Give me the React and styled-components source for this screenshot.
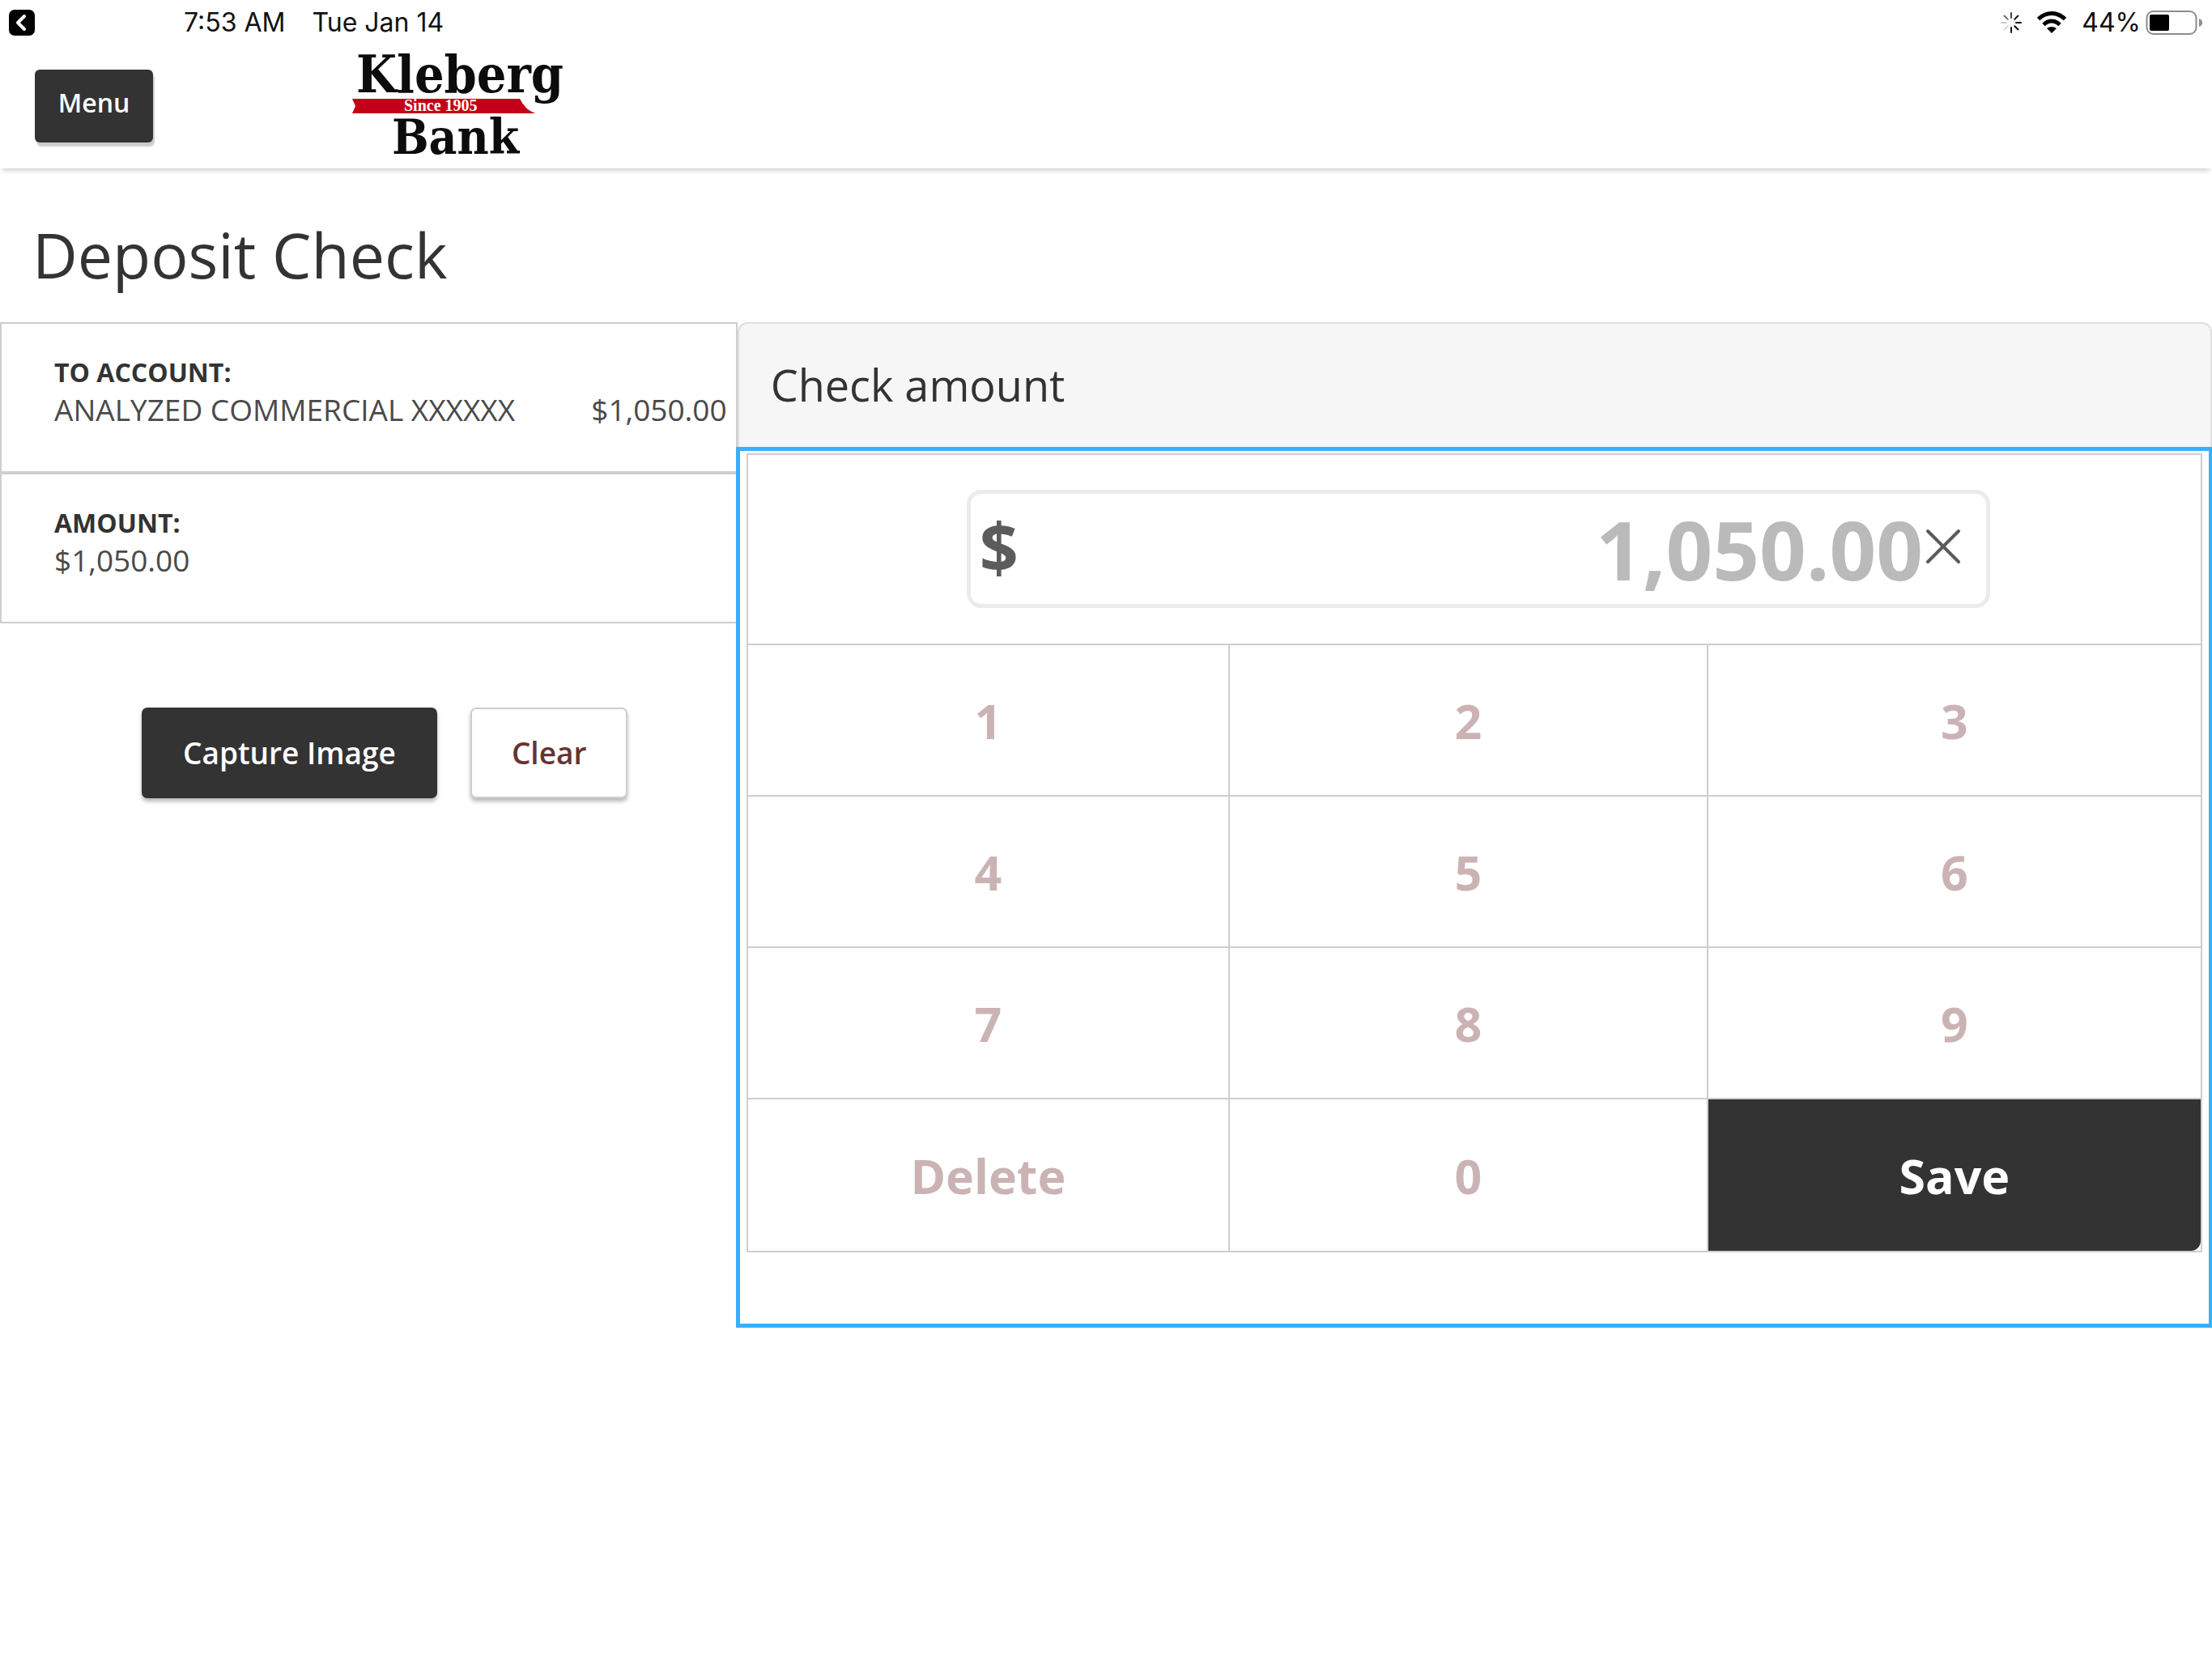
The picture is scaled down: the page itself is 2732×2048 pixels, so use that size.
import React, { useState } from "react";
import styled, { createGlobalStyle, css } from "styled-components";

const GlobalStyle = createGlobalStyle`
  *, *::before, *::after { box-sizing: border-box; }
  body {
    margin: 0;
    background: #fff;
    color: #333;
    font-family: "Open Sans", "Noto Sans", sans-serif;
  }
  button, input { font: inherit; color: inherit; }
  h1, h2, h3, p { margin: 0; font-weight: 400; }
`;

const line = "#cecece";
const ink = "#333";
const focusBlue = "#38b0ff";

const StatusBar = styled.div`
  display: flex;
  align-items: center;
  height: 54px;
  padding: 2px 11px 0;
  color: #111;
  font: 400 32px/40px Inter, "Liberation Sans", sans-serif;
`;

const BackButton = styled.button`
  display: flex;
  width: 32px;
  height: 32px;
  margin-right: 184px;
  padding: 0;
  border: 0;
  background: none;
`;

const StatusText = styled.span`
  margin-right: 33px;
`;

const StatusIcons = styled.div`
  display: flex;
  align-items: center;
  gap: 18px;
  margin-left: auto;
`;

const Battery = styled.span`
  display: flex;
  align-items: center;
  gap: 6px;
`;

const Header = styled.header`
  display: flex;
  align-items: center;
  height: 154px;
  padding: 0 43px;
  box-shadow: 0 6px 6px -3px rgba(0, 0, 0, 0.18);
`;

const MenuButton = styled.button`
  width: 146px;
  height: 90px;
  margin-right: 246px;
  padding: 0 0 8px;
  border: 0;
  border-radius: 6px;
  background: ${ink};
  color: #fff;
  font-size: 32px;
  font-weight: 600;
  line-height: 44px;
  box-shadow: 2px 5px 2px rgba(0, 0, 0, 0.2);
`;

const Logo = styled.svg`
  display: block;
  overflow: visible;
  font-weight: 700;
`;

const LogoName = styled.text`
  fill: #0c0c0c;
  font-family: "DejaVu Serif Condensed", "DejaVu Serif", serif;
`;

const LogoTagline = styled.text`
  fill: #fff;
  font-family: "Liberation Serif", serif;
  font-size: 20px;
`;

const Title = styled.h1`
  padding: 65px 40px 41px;
  font-size: 77px;
  line-height: 84px;
`;

const Columns = styled.div`
  display: grid;
  grid-template-columns: minmax(0, 1fr) minmax(0, 2fr);
  align-items: start;
`;

const Detail = styled.section`
  padding: 37px 11px 53px 65px;
  border: 2px solid ${line};
  line-height: 46px;
`;

const DetailLabel = styled.h3`
  font-size: 32px;
  font-weight: 700;
  line-height: 46px;
  text-transform: uppercase;
`;

const DetailValue = styled.p`
  display: flex;
  justify-content: space-between;
  color: #4a4a4a;
  font-size: 37px;
`;

const Actions = styled.div`
  display: flex;
  gap: 41px;
  padding: 104px 40px 0 175px;
`;

const ActionButton = styled.button`
  height: 112px;
  padding: 0 49px;
  border: 2px solid ${line};
  border-radius: 7px;
  background: #fff;
  color: #663333;
  font-size: 37px;
  font-weight: 600;
  line-height: 50px;
  box-shadow: 0 4px 5px rgba(0, 0, 0, 0.28);
  ${(p) =>
    p.$primary &&
    css`
      border-color: ${ink};
      background: ${ink};
      color: #fff;
    `}
`;

const AmountPanel = styled.section`
  margin-left: -2px;
`;

const PanelTitle = styled.h2`
  margin-left: 2px;
  padding: 45px 39px 47px;
  border: 2px solid #dedede;
  border-bottom: 0;
  border-radius: 12px 12px 0 0;
  background: #f6f6f6;
  font-size: 54px;
  line-height: 60px;
`;

const PanelBody = styled.div`
  padding: 3px 8px 88px;
  border: 5px solid ${focusBlue};
  border-right-width: 4px;
  background: #fff;
`;

const Keypad = styled.div`
  display: grid;
  grid-template-columns: 594fr 589fr 609fr;
  grid-template-rows: auto repeat(3, 185px) 187px;
  gap: 2px;
  border: 2px solid ${line};
  background: ${line};
`;

const AmountCell = styled.div`
  grid-column: 1 / -1;
  padding: 43px 260px 44px 270px;
  background: #fff;
`;

const AmountField = styled.div`
  display: flex;
  align-items: center;
  height: 146px;
  padding: 0 28px 0 11px;
  border: 5px solid #ebebeb;
  border-radius: 18px;
`;

const CurrencyLabel = styled.label`
  padding-bottom: 6px;
  color: #5c5c5c;
  font-size: 84px;
  font-weight: 700;
  line-height: 110px;
`;

const AmountInput = styled.input`
  flex: 1;
  min-width: 0;
  height: 130px;
  padding: 0;
  border: 0;
  outline: 0;
  background: none;
  color: #bababa;
  font-size: 101px;
  font-weight: 700;
  text-align: right;
`;

const ClearAmount = styled.button`
  display: flex;
  align-items: center;
  justify-content: center;
  width: 50px;
  height: 50px;
  padding: 0 0 6px;
  border: 0;
  background: none;
  color: #5a5a5a;
`;

const Key = styled.button`
  padding: 0;
  border: 0;
  background: #fff;
  color: #cbb3b4;
  font-size: 59px;
  font-weight: 700;
  line-height: 82px;
  ${(p) =>
    p.$primary &&
    css`
      border-bottom-right-radius: 12px;
      background: ${ink};
      color: #fff;
    `}
`;

const KeyCell = styled.div`
  display: grid;
  background: #fff;
`;

const spokes = [0.2, 0.55, 0.75, 0.9, 0.95, 0.95, 0.9, 0.15];

function BankLogo() {
  return (
    <Logo width="262" height="128" viewBox="0 0 262 128" role="img" aria-label="Kleberg Bank, since 1905">
      <path d="M0 55H207Q214 69 226 73H0L4 64Z" fill="#c40018" />
      <LogoName x="5" y="47" fontSize="64">Kleberg</LogoName>
      <LogoTagline x="64" y="70">Since 1905</LogoTagline>
      <LogoName x="49" y="123" fontSize="60">Bank</LogoName>
    </Logo>
  );
}

const toAmount = (digits) =>
  (Number(digits.replace(/\D/g, "")) / 100).toLocaleString("en-US", { minimumFractionDigits: 2 });

export default function App() {
  const [amount, setAmount] = useState("1,050.00");
  const press = (digit) => setAmount(toAmount(amount + digit));
  const removeLast = () => setAmount(toAmount(amount.slice(0, -1)));

  return (
    <>
      <GlobalStyle />
      <StatusBar>
        <BackButton aria-label="Back">
          <svg width="32" height="32" viewBox="0 0 32 32">
            <rect width="32" height="32" rx="7" fill="#000" />
            <path d="M19 8L11 16L19 24" fill="none" stroke="#fff" strokeWidth="4" strokeLinecap="round" strokeLinejoin="round" />
          </svg>
        </BackButton>
        <StatusText>7:53 AM</StatusText>
        <StatusText>Tue Jan 14</StatusText>
        <StatusIcons>
          <svg width="26" height="26" viewBox="-13 -13 26 26" stroke="#000" strokeWidth="2" strokeLinecap="round" aria-hidden="true">
            {spokes.map((o, i) => (
              <path key={i} d="M-6 0H-12" opacity={o} transform={`rotate(${i * 45})`} />
            ))}
          </svg>
          <svg width="38" height="28" viewBox="0 0 38 28" aria-hidden="true">
            <path d="M2.5 9.5Q10 2.5 19 2.5T35.5 9.5M9 16.5Q13.5 12 19 12T29 16.5" fill="none" stroke="#000" strokeWidth="5" />
            <path d="M13 21Q19 17 25 21L19 27Z" fill="#000" />
          </svg>
          <Battery>
            44%
            <svg width="71" height="30" viewBox="0 0 71 30" aria-hidden="true">
              <rect x="1.5" y="1" width="61" height="28" rx="8" fill="#fff" stroke="#8c8c8c" strokeWidth="2" />
              <rect x="5" y="5" width="24" height="20" rx="2" fill="#000" />
              <path d="M66 10Q70 11 70 15T66 20Z" fill="#8c8c8c" />
            </svg>
          </Battery>
        </StatusIcons>
      </StatusBar>

      <Header>
        <MenuButton>Menu</MenuButton>
        <BankLogo />
      </Header>

      <main>
        <Title>Deposit Check</Title>
        <Columns>
          <div>
            <Detail>
              <DetailLabel>To account:</DetailLabel>
              <DetailValue>
                <span>ANALYZED COMMERCIAL XXXXXX</span>
                <span>$1,050.00</span>
              </DetailValue>
            </Detail>
            <Detail>
              <DetailLabel>Amount:</DetailLabel>
              <DetailValue>$1,050.00</DetailValue>
            </Detail>
            <Actions>
              <ActionButton $primary>Capture Image</ActionButton>
              <ActionButton>Clear</ActionButton>
            </Actions>
          </div>

          <AmountPanel>
            <PanelTitle>Check amount</PanelTitle>
            <PanelBody>
              <Keypad>
                <AmountCell>
                  <AmountField>
                    <CurrencyLabel htmlFor="amount">$</CurrencyLabel>
                    <AmountInput
                      id="amount"
                      type="text"
                      inputMode="none"
                      value={amount}
                      onChange={(e) => setAmount(e.target.value)}
                    />
                    <ClearAmount aria-label="Clear amount" onClick={() => setAmount("0.00")}>
                      <svg width="44" height="44" viewBox="0 0 44 44" aria-hidden="true">
                        <path d="M3 3L41 41M41 3L3 41" stroke="currentColor" strokeWidth="4" strokeLinecap="round" />
                      </svg>
                    </ClearAmount>
                  </AmountField>
                </AmountCell>
                {["1", "2", "3", "4", "5", "6", "7", "8", "9"].map((d) => (
                  <Key key={d} onClick={() => press(d)}>{d}</Key>
                ))}
                <Key onClick={removeLast}>Delete</Key>
                <Key onClick={() => press("0")}>0</Key>
                <KeyCell>
                  <Key $primary>Save</Key>
                </KeyCell>
              </Keypad>
            </PanelBody>
          </AmountPanel>
        </Columns>
      </main>
    </>
  );
}
